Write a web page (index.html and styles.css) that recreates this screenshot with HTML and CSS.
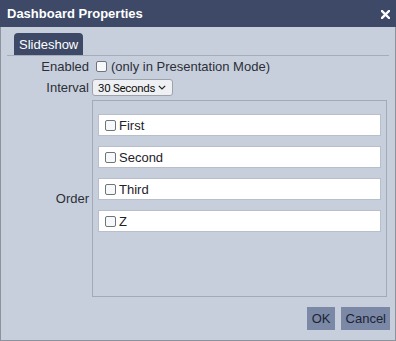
FILE: index.html
```html
<!DOCTYPE html>
<html lang="en">
<head>
    <meta charset="UTF-8">
    <meta name="viewport" content="width=device-width, initial-scale=1.0">
    <title>Dashboard Properties</title>
    <link rel="stylesheet" href="styles.css">
</head>
<body>

<div class="dialog">
    <div class="titlebar">
        <span class="title">Dashboard Properties</span>
        <svg class="close" width="9" height="9" viewBox="0 0 9 9">
            <path d="M1 1 L8 8 M8 1 L1 8" stroke="#fff" stroke-width="2.4" stroke-linecap="square"/>
        </svg>
    </div>

    <div class="tabs">
        <div class="tab">Slideshow</div>
    </div>

    <div class="form">
        <label class="label">Enabled</label>
        <div class="field">
            <input type="checkbox" class="check enabled-check">
            <span>(only in Presentation Mode)</span>
        </div>

        <label class="label">Interval</label>
        <div class="field">
            <div class="select">
                <span>30 Seconds</span>
                <svg width="8" height="5" viewBox="0 0 8 5">
                    <path d="M0.8 0.8 L4 4 L7.2 0.8" fill="none" stroke="#222" stroke-width="1.2"/>
                </svg>
            </div>
        </div>

        <label class="label order-label">Order</label>
        <div class="order-box">
            <div class="item"><input type="checkbox" class="check"><span>First</span></div>
            <div class="item"><input type="checkbox" class="check"><span>Second</span></div>
            <div class="item"><input type="checkbox" class="check"><span>Third</span></div>
            <div class="item"><input type="checkbox" class="check"><span>Z</span></div>
        </div>
    </div>

    <div class="buttons">
        <button class="btn">OK</button>
        <button class="btn">Cancel</button>
    </div>
</div>

</body>
</html>
```

FILE: styles.css
```css
html, body {
    margin: 0;
    padding: 0;
}
body {
    font-family: "Liberation Sans", Arial, sans-serif;
    font-size: 13px;
    color: #2b2f38;
}
.dialog {
    width: 396px;
    height: 341px;
    box-sizing: border-box;
    border: 1px solid #8d939d;
    border-top: none;
    background-color: #c8cfdc;
    display: flex;
    flex-direction: column;
}
.titlebar {
    height: 27px;
    background-color: #3d4966;
    color: #fff;
    display: flex;
    align-items: center;
    justify-content: space-between;
    padding: 0 6px 0 7px;
    margin: 0 -1px;
}
.title {
    font-weight: bold;
    font-size: 13px;
}
.close {
    display: block;
    margin-top: 1px;
}
.tabs {
    margin: 6px 6px 0 6px;
    border-bottom: 1px solid #a6adba;
    display: flex;
}
.tab {
    margin-left: 7px;
    height: 22px;
    line-height: 23px;
    padding: 0 5px;
    background-color: #3d4966;
    color: #fff;
    border-radius: 4px 4px 0 0;
    font-size: 13px;
}
.form {
    flex: 1;
    display: grid;
    grid-template-columns: 88px 1fr;
    grid-template-rows: 17px 17px 1fr;
    column-gap: 3px;
    row-gap: 4px;
    padding: 2px 6px 0 0;
}
.label {
    text-align: right;
    align-self: center;
}
.order-label {
    align-self: center;
}
.field {
    display: flex;
    align-items: center;
}
.check {
    appearance: none;
    -webkit-appearance: none;
    width: 11px;
    height: 11px;
    margin: 0;
    border: 1px solid #6f737b;
    border-radius: 2px;
    background-color: #f7f8fa;
    box-sizing: border-box;
    flex-shrink: 0;
}
.enabled-check {
    margin: 0 4px 0 4px;
}
.select {
    height: 17px;
    width: 81px;
    box-sizing: border-box;
    border: 1px solid #9ea3ab;
    border-radius: 3px;
    background-color: #eef0f4;
    display: flex;
    align-items: center;
    justify-content: space-between;
    padding: 0 6px 0 5px;
    font-family: Roboto, "Liberation Sans", sans-serif;
    font-size: 11.5px;
    letter-spacing: -0.3px;
    color: #111;
    white-space: nowrap;
}
.order-box {
    border: 1px solid #a3aab7;
    padding: 13px 5px 0 5px;
    display: flex;
    flex-direction: column;
    gap: 10px;
    width: 295px;
    box-sizing: border-box;
}
.item {
    height: 22px;
    box-sizing: border-box;
    background-color: #fff;
    border: 1px solid #b9bfca;
    display: flex;
    align-items: center;
    gap: 3px;
    padding-left: 6px;
    font-size: 13px;
    color: #1e2229;
}
.buttons {
    display: flex;
    justify-content: flex-end;
    gap: 6px;
    padding: 10px 5px 10px 0;
}
.btn {
    height: 23px;
    padding: 0 4px 0 5px;
    border: none;
    background-color: #7b88a6;
    color: #1c2435;
    font-family: "Liberation Sans", Arial, sans-serif;
    font-size: 13px;
}
```
